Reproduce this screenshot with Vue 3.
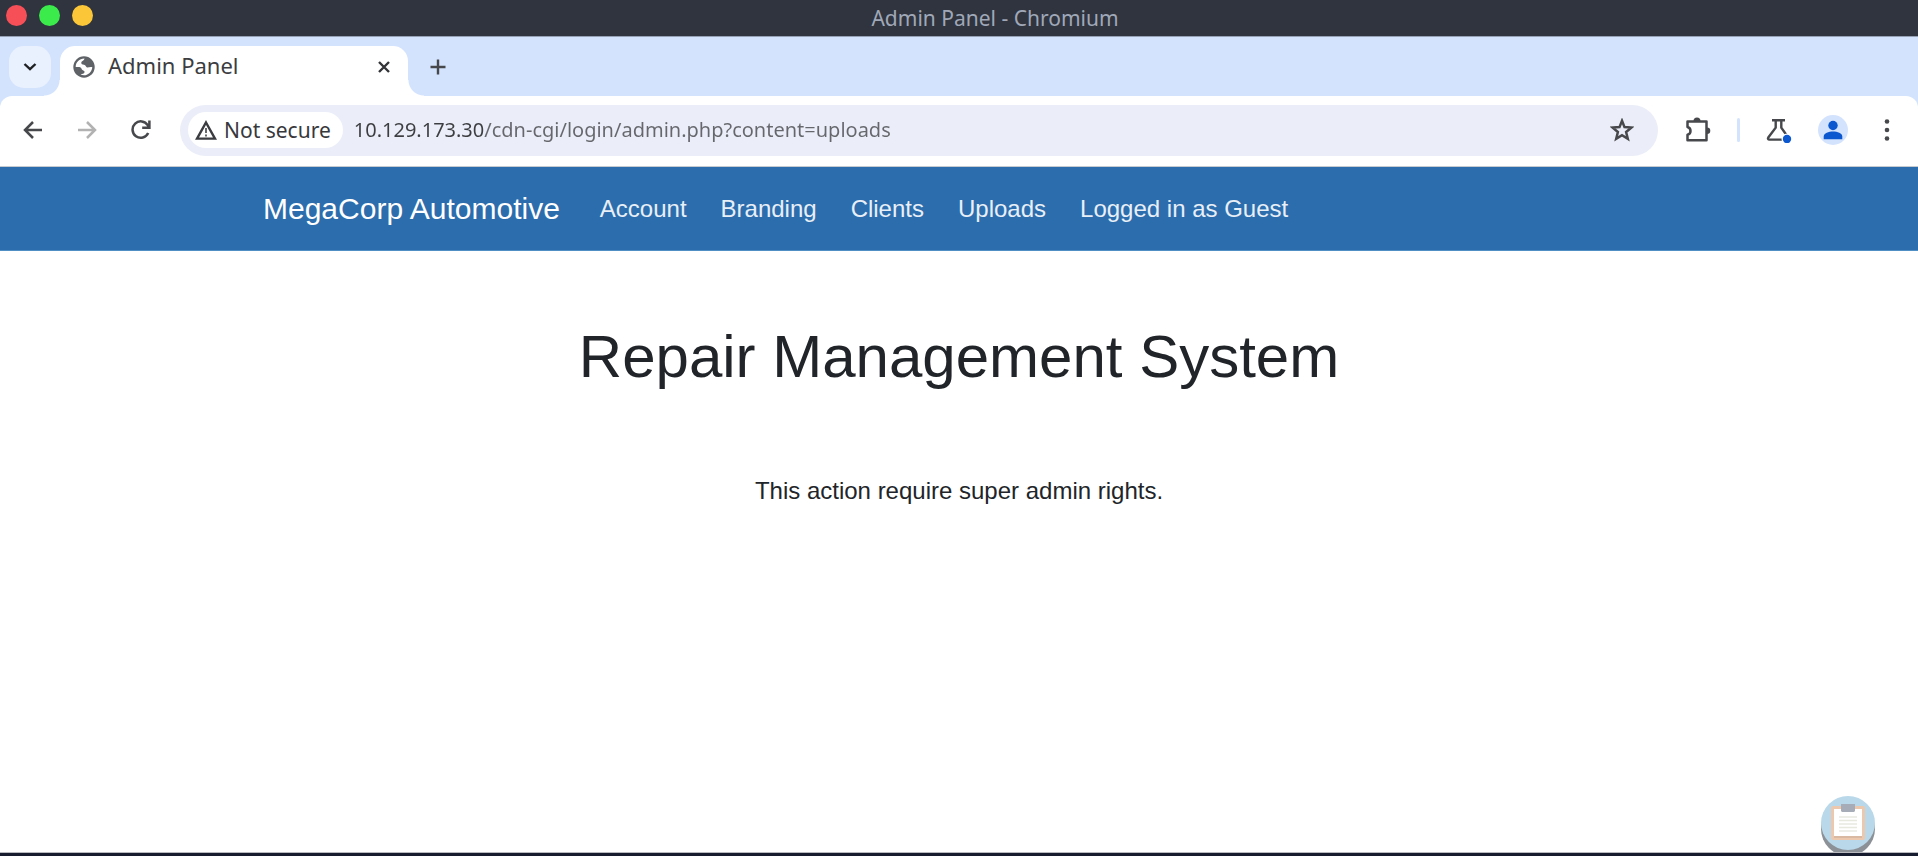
<script setup>
import { ref } from 'vue'

const address = ref('10.129.173.30/cdn-cgi/login/admin.php?content=uploads')
const links = ['Account', 'Branding', 'Clients', 'Uploads', 'Logged in as Guest']
</script>

<template>
  <div class="window">
    <header class="titlebar">
      <div class="lights">
        <button class="light close" aria-label="Close window"></button>
        <button class="light zoom" aria-label="Maximize window"></button>
        <button class="light minimize" aria-label="Minimize window"></button>
      </div>
      <span class="window-title">Admin Panel - Chromium</span>
    </header>

    <div class="tabstrip">
      <button class="tab-search" aria-label="Search tabs">
        <svg width="14" height="10" viewBox="0 0 14 10"><path d="M1.5 2 7 7.2 12.500 2" fill="none" stroke="#1f2023" stroke-width="2.400" /></svg>
      </button>
      <div class="tab">
        <svg width="22" height="22" viewBox="0 0 22 22">
          <circle cx="11" cy="11" r="10.700" fill="#5f6368" />
          <path d="M11.500 2.500C11 5 9 4.500 8.300 6.500 8 8 9.500 8.600 11 8.800c2 .2 1.500 2.200 3 2.600 1.500.3 3-.8 5.300-.2-.2 2.400-1.300 4.500-3 6-1.600 1.300-3.300 2-5.300 2.100-1.500 0-2.600-.3-3.400-.8 1.600-.6 3.900-.7 4-2.500.1-1.400-1.600-1.300-2.500-2.300-.8-1-.6-2.200-2-2.500-1.600-.3-3 .1-4.400-.2C2.700 6 6.500 2.400 11.500 2.500Z" fill="#fff" />
        </svg>
        <span class="tab-title">Admin Panel</span>
        <button class="plain tab-close" aria-label="Close tab">
          <svg width="14" height="14" viewBox="0 0 14 14"><path d="m2 2 10 10M12 2 2 12" stroke="#333438" stroke-width="2.400" /></svg>
        </button>
      </div>
      <button class="plain new-tab" aria-label="New tab">
        <svg width="16" height="16" viewBox="0 0 16 16"><path d="M8 .5v15M.5 8h15" stroke="#47484c" stroke-width="2.400" /></svg>
      </button>
    </div>

    <div class="toolbar">
      <div class="history">
        <button class="plain" aria-label="Back">
          <svg width="20" height="18" viewBox="0 0 20 18"><path d="M19 9H2.500M10 1 2 9l8 8" fill="none" stroke="#47484b" stroke-width="2.500" /></svg>
        </button>
        <button class="plain" aria-label="Forward" disabled>
          <svg width="20" height="18" viewBox="0 0 20 18"><path d="M1 9h16.500M10 1l8 8-8 8" fill="none" stroke="#b2b2b2" stroke-width="2.500" /></svg>
        </button>
        <button class="plain" aria-label="Reload">
          <svg width="20" height="20" viewBox="0 0 20 20"><path d="M17.200 13A8.200 8.200 0 1 1 16.700 5.200L18 7M18.400.5v7.200h-7.200" fill="none" stroke="#47484b" stroke-width="2.500" /></svg>
        </button>
      </div>

      <div class="omnibox">
        <button class="security">
          <svg width="22" height="20" viewBox="0 0 22 20">
            <path d="M11 2.500 20 18.600H2Z" fill="none" stroke="#3b3c40" stroke-width="2.400" />
            <path d="M11 8v5M11 14.500v2" stroke="#66676b" stroke-width="2" />
          </svg>
          <span>Not secure</span>
        </button>
        <input v-model="address" class="address" type="text" aria-label="Address" spellcheck="false" />
        <button class="plain" aria-label="Bookmark this page">
          <svg width="24" height="24" viewBox="0 0 24 24"><path d="m12 2.800 2.500 6.300 6.800.5-5.200 4.400 1.700 6.700-5.800-3.600-5.800 3.600L7.900 14 2.700 9.600l6.800-.5Z" fill="none" stroke="#47484b" stroke-width="2.500" /></svg>
        </button>
      </div>

      <div class="actions">
        <button class="plain" aria-label="Extensions">
          <svg width="26" height="26" viewBox="0 0 26 26">
            <path d="M2.500 4.500h19v18.800h-19v-5.500c1.400-.4 3-2 3-3.900s-1.600-3.500-3-3.900Z" fill="none" stroke="#47484b" stroke-width="2.500" stroke-linejoin="round" />
            <path d="M8.500 4a3.500 3.500 0 0 1 7 0ZM22 10.500a3.300 3.300 0 0 1 0 6.600Z" fill="#47484b" />
          </svg>
        </button>
        <span class="divider"></span>
        <button class="plain" aria-label="Experiments">
          <svg width="26" height="26" viewBox="0 0 26 26">
            <path d="M6 3.200h13M9.700 3.200v7.500L2.300 20.500c-.7 1.200-.2 2.100 1.100 2.100H18M15.300 3.200v7.500l5 7" fill="none" stroke="#47484b" stroke-width="2.400" />
            <circle cx="21" cy="22" r="5.500" fill="#fff" />
            <circle cx="21" cy="22" r="4.200" fill="#0b57d0" />
          </svg>
        </button>
        <button class="plain" aria-label="Profile">
          <svg width="30" height="30" viewBox="0 0 30 30">
            <circle cx="15" cy="15" r="15" fill="#d3e3fd" />
            <circle cx="15" cy="10.500" r="4.700" fill="#0b57d0" />
            <path d="M5.700 24.200v-2.700c0-3.400 5-5 9.300-5s9.300 1.600 9.300 5v2.700Z" fill="#0b57d0" />
          </svg>
        </button>
        <button class="plain menu" aria-label="Menu">
          <svg width="6" height="22" viewBox="0 0 6 22" fill="#47484b"><circle cx="3" cy="2.500" r="2.300" /><circle cx="3" cy="11" r="2.300" /><circle cx="3" cy="19.500" r="2.300" /></svg>
        </button>
      </div>
    </div>

    <nav class="navbar">
      <div class="container">
        <a class="brand" href="#">MegaCorp Automotive</a>
        <ul class="links">
          <li v-for="link in links" :key="link"><a href="#">{{ link }}</a></li>
        </ul>
      </div>
    </nav>

    <main class="content">
      <h1>Repair Management System</h1>
      <p>This action require super admin rights.</p>
      <button class="plain clipboard" aria-label="Clipboard">
        <svg width="54" height="60" viewBox="0 0 54 60">
          <circle cx="27" cy="33" r="27" fill="#8b9197" />
          <circle cx="27" cy="27" r="27" fill="#b9d8e9" />
          <rect x="10" y="10" width="34" height="34" rx="2" fill="#ecc9ae" />
          <path d="M13 40h28v2H13z" fill="#d9b9a2" />
          <path d="M13 13h28v27H13z" fill="#fff" />
          <path d="M20 8h14v7l-1 1H21l-1-1z" fill="#a6adb9" />
          <path d="M18 21h18M18 24.500h18M18 28h18M18 31.500h18M18 35h18" stroke="#e7e9df" stroke-width="1.500" />
        </svg>
      </button>
    </main>
    <footer class="dock-edge"></footer>
  </div>
</template>

<style>
body {
  margin: 0;
}
</style>

<style scoped>
* {
  box-sizing: border-box;
}
.window {
  display: flex;
  flex-direction: column;
  min-height: 100vh;
  background: #d3e3fd;
  font-family: "Noto Sans", sans-serif;
}
button {
  margin: 0;
  padding: 0;
  border: 0;
  font: inherit;
  color: inherit;
}
svg {
  display: block;
  flex: none;
}
.plain {
  background: none;
}
.titlebar {
  display: grid;
  grid-template-columns: 1fr auto 1fr;
  align-items: center;
  height: 36px;
  padding-left: 6px;
  background: #2f343f;
}
.lights {
  display: flex;
  gap: 12px;
  padding-bottom: 5px;
}
.light {
  width: 21px;
  height: 21px;
  border-radius: 50%;
}
.close {
  background: #f74f57;
}
.zoom {
  background: #3aeb4b;
}
.minimize {
  background: #fbc638;
}
.window-title {
  margin-left: 66px;
  color: #a0a8b8;
  font-size: 21px;
  line-height: 36px;
}
.tabstrip {
  display: flex;
  height: 60px;
  padding: 9px 9px 0;
  border-top: 1px solid #97a1b6;
}
.tab-search {
  display: grid;
  place-items: center;
  width: 42px;
  height: 42px;
  border-radius: 15px;
  background: #eaf1fe;
}
.tab {
  position: relative;
  display: flex;
  align-items: center;
  gap: 13px;
  width: 348px;
  margin-left: 9px;
  padding: 0 17px 9px 13px;
  border-radius: 15px 15px 0 0;
  background: #fff;
}
.tab::before,
.tab::after {
  content: "";
  position: absolute;
  bottom: 0;
  width: 16px;
  height: 16px;
}
.tab::before {
  right: 100%;
  background: radial-gradient(circle at 0 0, transparent 15px, #fff 16px);
}
.tab::after {
  left: 100%;
  background: radial-gradient(circle at 100% 0, transparent 15px, #fff 16px);
}
.tab-title {
  flex: 1;
  padding-bottom: 3px;
  color: #3c3d41;
  font-size: 22px;
  line-height: 30px;
}
.new-tab {
  margin-left: 22px;
  padding-bottom: 9px;
}
.toolbar {
  display: flex;
  align-items: center;
  height: 71px;
  padding: 0 28px 2px 23px;
  border-bottom: 1px solid #c5cbd0;
  border-radius: 12px 12px 0 0;
  background: #fff;
}
.history {
  display: flex;
  align-items: center;
  gap: 34px;
}
.omnibox {
  display: flex;
  flex: 1;
  align-items: center;
  height: 51px;
  margin-left: 29px;
  padding: 0 24px 0 8px;
  border-radius: 26px;
  background: #ebeef8;
}
.security {
  display: flex;
  align-items: center;
  gap: 7px;
  height: 36px;
  padding: 0 12px 0 7px;
  border-radius: 18px;
  background: #fff;
  color: #37383c;
  font-size: 21px;
  line-height: 36px;
  white-space: nowrap;
}
/* The host part of the address is darker than its path. */
.address {
  flex: 1;
  min-width: 0;
  height: 36px;
  margin-left: 11px;
  padding: 0;
  border: 0;
  outline: 0;
  background: linear-gradient(90deg, #3c3d41 130px, #66676d 130px);
  background-clip: text;
  color: transparent;
  font: 20px/36px "Noto Sans", sans-serif;
}
.actions {
  display: flex;
  align-items: center;
  gap: 26px;
  margin-left: 27px;
}
.menu {
  margin-left: 10px;
}
.divider {
  width: 3px;
  height: 24px;
  border-radius: 2px;
  background: #d3e3fd;
}
.navbar {
  display: flex;
  justify-content: center;
  padding: 0 24px;
  border-bottom: 1px solid #4f8fc4;
  background: #2c6dad;
  color: #fff;
  font-family: "Liberation Sans", Arial, sans-serif;
}
.container {
  display: flex;
  align-items: center;
  gap: 40px;
  width: 100%;
  max-width: 1392px;
  min-height: 83px;
}
a {
  color: inherit;
  text-decoration: none;
}
.brand {
  font-size: 30px;
  line-height: 45px;
}
.links {
  display: flex;
  gap: 34px;
  margin: 0;
  padding: 0;
  list-style: none;
  color: #e8eff7;
  font-size: 24px;
  line-height: 36px;
}
.content {
  position: relative;
  flex: 1;
  padding-top: 70px;
  background: #fff;
  color: #212529;
  font-family: "Liberation Sans", Arial, sans-serif;
  text-align: center;
  overflow: hidden;
}
h1 {
  margin: 0;
  font-size: 60px;
  font-weight: 400;
  line-height: 72px;
}
p {
  margin: 80px 0 0;
  font-size: 24px;
  line-height: 36px;
}
.clipboard {
  position: absolute;
  right: 43px;
  bottom: -4px;
}
.dock-edge {
  height: 4px;
  border-top: 1px solid #b9bac0;
  background: #171c2e;
}
</style>
